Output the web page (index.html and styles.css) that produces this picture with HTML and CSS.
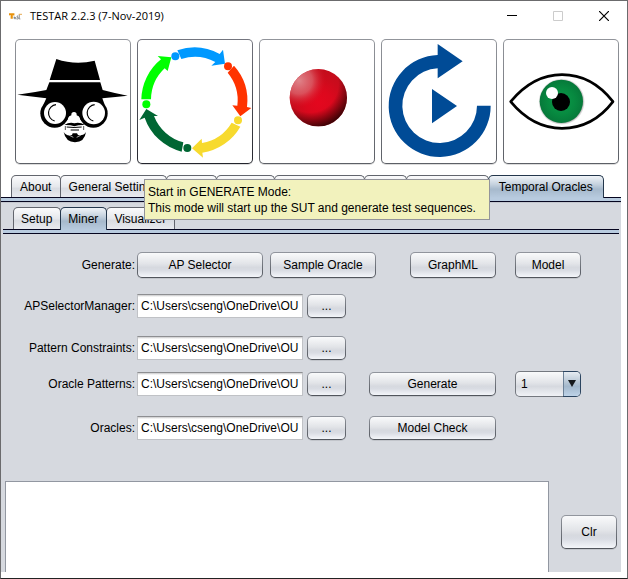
FILE: index.html
```html
<!DOCTYPE html>
<html lang="en">
<head>
<meta charset="utf-8">
<title>TESTAR 2.2.3 (7-Nov-2019)</title>
<link rel="stylesheet" href="styles.css">
</head>
<body>
<div class="window">
  <header class="titlebar">
    <svg class="app-icon" viewBox="0 0 12 8" aria-hidden="true">
      <path d="M0 1h5v2H4L3.500 2.500V6H1.500V2.500L0 3z" fill="#e8920c"/>
      <path d="M4.500 5h2M4.800 4v2h2M8.500 3.500h-1v1.300h1v1.500H7M9.500 2v4.300h1" fill="none" stroke="#7d8287" stroke-width=".8"/>
      <path d="M9 2h3" stroke="#e8b060"/>
    </svg>
    <h1 class="title">TESTAR 2.2.3 (7-Nov-2019)</h1>
    <button class="win-btn" aria-label="Minimize"><svg viewBox="0 0 10 10"><path d="M0 4.500h10" stroke="#000"/></svg></button>
    <button class="win-btn" aria-label="Maximize" disabled><svg viewBox="0 0 10 10"><path d="M.5.5h9v9h-9z" fill="none" stroke="#ccc"/></svg></button>
    <button class="win-btn" aria-label="Close"><svg viewBox="0 0 10 10"><path d="M0 0l10 10M10 0L0 10" stroke="#000" stroke-width="1.200"/></svg></button>
  </header>

  <nav class="modes" aria-label="Modes">
    <button class="mode" aria-label="Spy">
      <svg viewBox="18 18 342 369">
        <path d="M139 75Q196 95 254 80L270 138H119z"/>
        <path d="M118 145H271L278 168Q315 178 353 185Q318 188 277 193L284 212H100L109 193Q65 187 22 182Q70 176 109 168z"/>
        <path d="M120 190h144l-22 70q-20 6-30-2a20 16 0 0 0-40 0q-10 8-30 2z"/>
        <circle cx="134" cy="238" r="43"/><circle cx="250" cy="238" r="43"/>
        <circle cx="135" cy="237" r="33" fill="#fff"/><circle cx="251" cy="237" r="34" fill="#fff"/>
        <path d="M138 212a25 25 0 0 0-4 49M254 212a25 25 0 0 0-4 49" fill="none" stroke="#000" stroke-width="3.500"/>
        <circle cx="192" cy="242" r="8" fill="#fff"/>
        <path d="M163 273q16-10 30-5q15-5 32 5q-18-1-32 4q-13-5-30-4z"/>
        <path d="M170 279q22 3 45 0M182 288h25" fill="none" stroke="#000" stroke-width="3"/>
        <path d="M161 294q9 14 25 9l2-5h13l3 5q16 4 24-9q-4 30-33 31q-28-1-34-31z"/>
        <path d="M166 276v12M221 276v12" stroke="#000" stroke-width="2"/>
        <path d="M178 304l12 6M212 304l-12 6" stroke="#fff" stroke-width="2"/>
      </svg>
    </button>
    <button class="mode mode-focus" aria-label="Generate" aria-describedby="generate-tip">
      <svg viewBox="18 18 342 369">
        <g fill="#0f0"><path d="M28 196A158 158 0 0 1 87 76L77 66L118 70L107 111L98 103A130 130 0 0 0 57 196z"/><circle cx="43" cy="211" r="12"/></g>
        <g fill="#09f"><path d="M136 49A158 158 0 0 1 263 60L273 47L279 89L238 95L250 84A130 130 0 0 0 148 75z"/><circle cx="130" cy="67" r="12"/></g>
        <g fill="#f30"><path d="M306 95A158 158 0 0 1 345 219L358 222L325 247L301 214L316 215A130 130 0 0 0 287 116z"/><circle cx="288" cy="97" r="12"/></g>
        <g fill="#f7da2e"><path d="M325 278A158 158 0 0 1 211 356L213 371L180 343L209 314L210 327A130 130 0 0 0 299 266z"/><circle cx="318" cy="259" r="12"/></g>
        <g fill="#063"><path d="M149 353A158 158 0 0 1 38 251L22 258L43 225L78 246L66 246A130 130 0 0 0 154 325z"/><circle cx="166" cy="342" r="12"/></g>
      </svg>
    </button>
    <button class="mode" aria-label="Record">
      <svg viewBox="15 18 342 369">
        <defs>
          <radialGradient id="ball" gradientUnits="userSpaceOnUse" cx="192" cy="205" r="95">
            <stop offset="0" stop-color="#e4071e"/><stop offset=".4" stop-color="#dc081d"/><stop offset=".75" stop-color="#cc0b1c"/><stop offset="1" stop-color="#c40d1c"/>
          </radialGradient>
          <radialGradient id="glow" gradientUnits="userSpaceOnUse" cx="132" cy="140" r="80">
            <stop offset="0" stop-color="#e08a90" stop-opacity=".95"/><stop offset=".5" stop-color="#dc6870" stop-opacity=".75"/><stop offset="1" stop-color="#d81828" stop-opacity="0"/>
          </radialGradient>
          <radialGradient id="shade" gradientUnits="userSpaceOnUse" cx="165" cy="150" r="142">
            <stop offset=".6" stop-color="#200" stop-opacity="0"/><stop offset=".82" stop-color="#200" stop-opacity=".55"/><stop offset="1" stop-color="#100" stop-opacity=".95"/>
          </radialGradient>
        </defs>
        <circle cx="190" cy="191" r="86" fill="url(#ball)"/>
        <circle cx="190" cy="191" r="86" fill="url(#glow)"/>
        <circle cx="190" cy="191" r="86" fill="url(#shade)"/>
      </svg>
    </button>
    <button class="mode" aria-label="Replay">
      <svg viewBox="12 18 342 369">
        <path fill="#004b96" d="M338 215A153 153 0 1 1 179 63V30L254 82L179 133V103A112 112 0 1 0 297 215zM162 165L237 216L162 268z"/>
      </svg>
    </button>
    <button class="mode" aria-label="View">
      <svg viewBox="18 18 342 369">
        <defs>
          <radialGradient id="iris"><stop offset="0" stop-color="#0b9a4a"/><stop offset=".6" stop-color="#078a40"/><stop offset="1" stop-color="#06793a"/></radialGradient>
          <radialGradient id="halo"><stop offset=".88" stop-color="#555" stop-opacity=".7"/><stop offset="1" stop-color="#999" stop-opacity="0"/></radialGradient>
        </defs>
        <path d="M38 203C82 150 135 122 192 122S302 148 345 203C303 258 249 283 192 283S82 256 38 203z" fill="#fff" stroke="#000" stroke-width="8" stroke-linejoin="round"/>
        <circle cx="191" cy="203" r="70" fill="url(#halo)"/>
        <circle cx="190" cy="202" r="65" fill="url(#iris)"/>
        <circle cx="189" cy="204" r="27"/><circle cx="162" cy="177" r="18" fill="#fff"/>
      </svg>
    </button>
    <div class="tooltip" role="tooltip" id="generate-tip">Start in GENERATE Mode:<br>This mode will start up the SUT and generate test sequences.</div>
  </nav>

  <main class="content">
    <div class="tabs tabs-main" role="tablist">
      <button class="tab" role="tab">About</button>
      <button class="tab" role="tab">General Settings</button>
      <button class="tab" role="tab">Filters</button>
      <button class="tab" role="tab">Oracles</button>
      <button class="tab" role="tab">Time Settings</button>
      <button class="tab" role="tab">Misc</button>
      <button class="tab" role="tab">State Model</button>
      <button class="tab tab-selected" role="tab" aria-selected="true">Temporal Oracles</button>
    </div>
    <div class="band"></div>

    <section class="panel">
      <div class="tabs tabs-sub" role="tablist">
        <button class="tab" role="tab">Setup</button>
        <button class="tab tab-selected" role="tab" aria-selected="true">Miner</button>
        <button class="tab" role="tab">Visualizer</button>
      </div>
      <div class="band band-sub"></div>

      <form class="form">
        <div class="row row-top">
          <span class="label">Generate:</span>
          <button type="button" class="btn w-selector">AP Selector</button>
          <button type="button" class="btn w-sample">Sample Oracle</button>
          <button type="button" class="btn w-graph push">GraphML</button>
          <button type="button" class="btn w-small">Model</button>
        </div>
        <div class="row">
          <label class="label" for="apsm">APSelectorManager:</label>
          <input class="field" id="apsm" type="text" value="C:\Users\cseng\OneDrive\OU">
          <button type="button" class="btn w-dots">...</button>
        </div>
        <div class="row">
          <label class="label" for="constraints">Pattern Constraints:</label>
          <input class="field" id="constraints" type="text" value="C:\Users\cseng\OneDrive\OU">
          <button type="button" class="btn w-dots">...</button>
        </div>
        <div class="row row-tight">
          <label class="label" for="patterns">Oracle Patterns:</label>
          <input class="field" id="patterns" type="text" value="C:\Users\cseng\OneDrive\OU">
          <button type="button" class="btn w-dots">...</button>
          <button type="button" class="btn w-wide push">Generate</button>
          <span class="combo"><select class="combo-select" aria-label="Pattern"><option>1</option></select></span>
        </div>
        <div class="row row-last">
          <label class="label" for="oracles">Oracles:</label>
          <input class="field" id="oracles" type="text" value="C:\Users\cseng\OneDrive\OU">
          <button type="button" class="btn w-dots">...</button>
          <button type="button" class="btn w-wide push">Model Check</button>
          <span class="w-small"></span>
        </div>
      </form>

      <div class="output">
        <textarea class="log" aria-label="Output"></textarea>
        <button type="button" class="btn btn-clear">Clr</button>
      </div>
    </section>
  </main>
</div>
</body>
</html>
```
FILE: styles.css
```css
* { box-sizing: border-box; }

body {
  margin: 0;
  color: #000;
  font: 12px/16px "Liberation Sans", Arial, sans-serif;
}

button, input, select, textarea {
  margin: 0;
  color: inherit;
  font: inherit;
}

.window {
  display: flex;
  flex-direction: column;
  min-height: 100vh;
  padding-bottom: 6px;
  border: 1px solid #6b6b6d;
  border-bottom-color: #222;
  background: #fff;
}

/* Title bar */
.titlebar {
  display: flex;
  align-items: center;
  height: 30px;
  margin-bottom: 8px;
  padding-left: 8px;
}

.app-icon { width: 13px; height: 9px; }

.title {
  flex: 1;
  margin: 0 0 0 8px;
  font: 11px/16px "Open Sans", "Segoe UI", sans-serif;
}

.win-btn {
  display: flex;
  align-items: center;
  justify-content: center;
  width: 46px;
  height: 30px;
  padding: 0;
  border: 0;
  background: none;
}

.win-btn svg { width: 10px; height: 10px; }

/* Mode buttons */
.modes {
  position: relative;
  display: flex;
  gap: 6px;
  padding: 0 8px 0 14px;
}

.mode {
  flex: 1;
  height: 125px;
  padding: 0;
  border: 1px solid transparent;
  border-radius: 5px;
  background:
    linear-gradient(#fff, #fff) padding-box,
    linear-gradient(#92959b, #5c5f66) border-box;
  box-shadow: 0 1px 0 #dcdcdc;
}

.mode-focus {
  background:
    linear-gradient(#fff, #fff) padding-box,
    linear-gradient(#74767f, #23252d) border-box;
}

.mode svg { display: block; width: 100%; height: 100%; }

.tooltip {
  position: absolute;
  z-index: 5;
  top: 140px;
  left: 143px;
  width: 346px;
  padding: 4px 3px 3px;
  border: 1px solid #93949a;
  background: #f2f2bd;
  white-space: nowrap;
}

/* Tabs */
.content {
  display: flex;
  flex: 1;
  flex-direction: column;
  margin: 11px 6px 0 0;
}

.tabs { display: flex; }
.tabs-main { padding: 0 18px 0 10px; }
.tabs-main .tab { flex: 1 0 auto; padding: 0 7px; }
.tabs-main .tab-selected { flex-grow: 3; }
.tabs-sub { padding-left: 12px; }

.tab {
  height: 22px;
  margin-right: -1px;
  padding: 0 8px 0 7px;
  border: 1px solid #62656d;
  border-bottom: 0;
  border-radius: 5px 5px 0 0;
  background: linear-gradient(#fbfbfc, #e6e8ec 50%, #d9dce2 60%, #e8eaee);
  white-space: nowrap;
}

.tab-selected {
  position: relative;
  height: 23px;
  margin-bottom: -1px;
  border-color: #24374c;
  background: linear-gradient(#f0f4f8, #c3d0dd 40%, #a6b9cc 60%, #b8cbdf);
}

.band {
  height: 5px;
  border: solid #05051f;
  border-width: 1px 0;
  background: #b8cbdf;
}

.band-sub { margin: 0 2px; }

/* Panel */
.panel {
  display: flex;
  flex: 1;
  flex-direction: column;
  padding-top: 4px;
  border-top: 1px solid #c4c7ce;
  background: #d6d9df;
}

.form { padding: 18px 40px 0 0; }

.row {
  display: flex;
  align-items: center;
  height: 24px;
  margin-bottom: 18px;
}

.row-top { height: 26px; margin-bottom: 16px; }
.row-tight { margin: -6px 0 20px; }
.row-last { margin-bottom: 0; }

.label {
  width: 134px;
  margin-right: 2px;
  text-align: right;
}

.btn {
  height: 100%;
  padding: 0;
  border: 1px solid transparent;
  border-radius: 5px;
  background:
    linear-gradient(#f9fafb, #e2e4e8 45%, #d6d9df 60%, #d9dce3 72%, #f4f6fa) padding-box,
    linear-gradient(#92969e, #50545b) border-box;
  box-shadow: 0 1px 0 #c2c5cb;
}

.w-selector { width: 126px; }
.w-wide { width: 127px; }
.w-sample { width: 106px; margin-left: 7px; }
.w-graph { width: 86px; }
.w-small { width: 66px; }
.w-dots { width: 39px; margin-left: 4px; }
.push { margin-right: 19px; margin-left: auto; }

.field {
  width: 166px;
  height: 24px;
  padding: 0 3px;
  border: 1px solid #c0c2c6;
  border-top: 1px solid #8d8e91;
  border-radius: 0;
  background: linear-gradient(#c8c8ca, #fff 2px);
}

.combo {
  position: relative;
  width: 66px;
  height: 26px;
  margin: -1px 0;
}

.combo-select {
  width: 100%;
  height: 100%;
  padding: 0 22px 0 5px;
  border: 1px solid transparent;
  border-radius: 5px;
  appearance: none;
  background:
    linear-gradient(90deg, transparent 47px, #6c8197 47px 48px, transparent 48px) padding-box,
    linear-gradient(#e6ecf2, #b4c4d3 45%, #a3b8cc 60%, #bed3e8) right / 17px 100% no-repeat padding-box,
    linear-gradient(#f9fafb, #e2e4e8 45%, #d6d9df 60%, #f0f2f6) padding-box,
    linear-gradient(90deg, #74787f 48px, #2c4560 48px) border-box;
}

/* Drop-down arrow over the select */
.combo::after {
  content: "";
  position: absolute;
  top: 9px;
  right: 5px;
  border: 4px solid transparent;
  border-top: 7px solid #16191c;
  border-bottom: 0;
  pointer-events: none;
}

/* Output */
.output {
  display: flex;
  flex: 1;
  gap: 12px;
  align-items: flex-start;
  margin-top: 41px;
  padding: 0 4px;
}

.log {
  flex: 1;
  align-self: stretch;
  min-height: 60px;
  padding: 4px;
  border: 1px solid #9297a1;
  border-bottom: 0;
  border-radius: 0;
  background: #fff;
  resize: none;
}

.btn-clear {
  width: 56px;
  height: 34px;
  margin-top: 34px;
}
```
